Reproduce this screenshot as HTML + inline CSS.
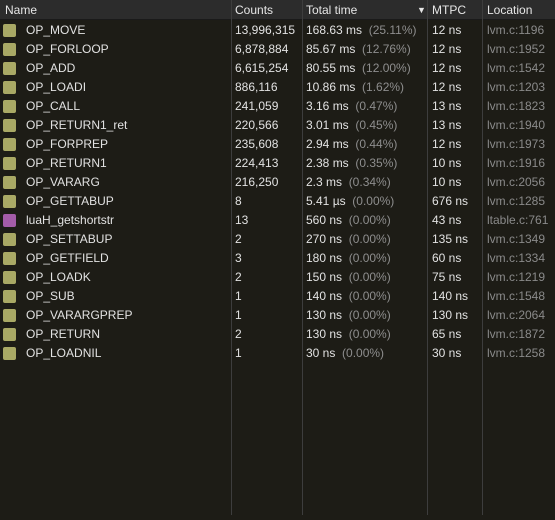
<!DOCTYPE html>
<html><head><style>
body{margin:0;width:555px;height:520px;background:#1d1c16;overflow:hidden;font-family:"Liberation Sans","DejaVu Sans",sans-serif;font-size:12px;color:#e2e2e2;position:relative}
.hdr{position:absolute;left:0;top:0;width:555px;height:19px;background:#2c2c2c;border-bottom:1px solid #1a1a1a}
.hdr span{position:absolute;top:0;line-height:20px;color:#e6e6e6}
.vl{position:absolute;top:0;height:515px;width:1px;background:#3d3d3d}
.r{position:absolute;left:0;width:555px;height:19px;line-height:19px}
.r span{position:absolute;top:0;white-space:pre}
.sq{position:absolute;left:3px;top:3px;width:13px;height:13px;border-radius:2px;background:#a9a965}
.p{color:#8e8e8e}
.loc{color:#8a8a8a}
</style></head><body>
<div class="hdr">
<span style="left:5px">Name</span>
<span style="left:235px">Counts</span>
<span style="left:306px">Total time</span>
<span style="left:417px;font-size:9px">▼</span>
<span style="left:432px">MTPC</span>
<span style="left:487px">Location</span>
</div>
<div class="vl" style="left:231px"></div>
<div class="vl" style="left:302px"></div>
<div class="vl" style="left:427px"></div>
<div class="vl" style="left:482px"></div>
<div id="rows"></div>
<div class="r" style="top:21px"><div class="sq"></div><span style="left:26px">OP_MOVE</span><span style="left:235px">13,996,315</span><span style="left:306px">168.63 ms  <span class="p" style="position:static">(25.11%)</span></span><span style="left:432px">12 ns</span><span class="loc" style="left:487px">lvm.c:1196</span></div>
<div class="r" style="top:40px"><div class="sq"></div><span style="left:26px">OP_FORLOOP</span><span style="left:235px">6,878,884</span><span style="left:306px">85.67 ms  <span class="p" style="position:static">(12.76%)</span></span><span style="left:432px">12 ns</span><span class="loc" style="left:487px">lvm.c:1952</span></div>
<div class="r" style="top:59px"><div class="sq"></div><span style="left:26px">OP_ADD</span><span style="left:235px">6,615,254</span><span style="left:306px">80.55 ms  <span class="p" style="position:static">(12.00%)</span></span><span style="left:432px">12 ns</span><span class="loc" style="left:487px">lvm.c:1542</span></div>
<div class="r" style="top:78px"><div class="sq"></div><span style="left:26px">OP_LOADI</span><span style="left:235px">886,116</span><span style="left:306px">10.86 ms  <span class="p" style="position:static">(1.62%)</span></span><span style="left:432px">12 ns</span><span class="loc" style="left:487px">lvm.c:1203</span></div>
<div class="r" style="top:97px"><div class="sq"></div><span style="left:26px">OP_CALL</span><span style="left:235px">241,059</span><span style="left:306px">3.16 ms  <span class="p" style="position:static">(0.47%)</span></span><span style="left:432px">13 ns</span><span class="loc" style="left:487px">lvm.c:1823</span></div>
<div class="r" style="top:116px"><div class="sq"></div><span style="left:26px">OP_RETURN1_ret</span><span style="left:235px">220,566</span><span style="left:306px">3.01 ms  <span class="p" style="position:static">(0.45%)</span></span><span style="left:432px">13 ns</span><span class="loc" style="left:487px">lvm.c:1940</span></div>
<div class="r" style="top:135px"><div class="sq"></div><span style="left:26px">OP_FORPREP</span><span style="left:235px">235,608</span><span style="left:306px">2.94 ms  <span class="p" style="position:static">(0.44%)</span></span><span style="left:432px">12 ns</span><span class="loc" style="left:487px">lvm.c:1973</span></div>
<div class="r" style="top:154px"><div class="sq"></div><span style="left:26px">OP_RETURN1</span><span style="left:235px">224,413</span><span style="left:306px">2.38 ms  <span class="p" style="position:static">(0.35%)</span></span><span style="left:432px">10 ns</span><span class="loc" style="left:487px">lvm.c:1916</span></div>
<div class="r" style="top:173px"><div class="sq"></div><span style="left:26px">OP_VARARG</span><span style="left:235px">216,250</span><span style="left:306px">2.3 ms  <span class="p" style="position:static">(0.34%)</span></span><span style="left:432px">10 ns</span><span class="loc" style="left:487px">lvm.c:2056</span></div>
<div class="r" style="top:192px"><div class="sq"></div><span style="left:26px">OP_GETTABUP</span><span style="left:235px">8</span><span style="left:306px">5.41 µs  <span class="p" style="position:static">(0.00%)</span></span><span style="left:432px">676 ns</span><span class="loc" style="left:487px">lvm.c:1285</span></div>
<div class="r" style="top:211px"><div class="sq" style="background:#a45ca8"></div><span style="left:26px">luaH_getshortstr</span><span style="left:235px">13</span><span style="left:306px">560 ns  <span class="p" style="position:static">(0.00%)</span></span><span style="left:432px">43 ns</span><span class="loc" style="left:487px">ltable.c:761</span></div>
<div class="r" style="top:230px"><div class="sq"></div><span style="left:26px">OP_SETTABUP</span><span style="left:235px">2</span><span style="left:306px">270 ns  <span class="p" style="position:static">(0.00%)</span></span><span style="left:432px">135 ns</span><span class="loc" style="left:487px">lvm.c:1349</span></div>
<div class="r" style="top:249px"><div class="sq"></div><span style="left:26px">OP_GETFIELD</span><span style="left:235px">3</span><span style="left:306px">180 ns  <span class="p" style="position:static">(0.00%)</span></span><span style="left:432px">60 ns</span><span class="loc" style="left:487px">lvm.c:1334</span></div>
<div class="r" style="top:268px"><div class="sq"></div><span style="left:26px">OP_LOADK</span><span style="left:235px">2</span><span style="left:306px">150 ns  <span class="p" style="position:static">(0.00%)</span></span><span style="left:432px">75 ns</span><span class="loc" style="left:487px">lvm.c:1219</span></div>
<div class="r" style="top:287px"><div class="sq"></div><span style="left:26px">OP_SUB</span><span style="left:235px">1</span><span style="left:306px">140 ns  <span class="p" style="position:static">(0.00%)</span></span><span style="left:432px">140 ns</span><span class="loc" style="left:487px">lvm.c:1548</span></div>
<div class="r" style="top:306px"><div class="sq"></div><span style="left:26px">OP_VARARGPREP</span><span style="left:235px">1</span><span style="left:306px">130 ns  <span class="p" style="position:static">(0.00%)</span></span><span style="left:432px">130 ns</span><span class="loc" style="left:487px">lvm.c:2064</span></div>
<div class="r" style="top:325px"><div class="sq"></div><span style="left:26px">OP_RETURN</span><span style="left:235px">2</span><span style="left:306px">130 ns  <span class="p" style="position:static">(0.00%)</span></span><span style="left:432px">65 ns</span><span class="loc" style="left:487px">lvm.c:1872</span></div>
<div class="r" style="top:344px"><div class="sq"></div><span style="left:26px">OP_LOADNIL</span><span style="left:235px">1</span><span style="left:306px">30 ns  <span class="p" style="position:static">(0.00%)</span></span><span style="left:432px">30 ns</span><span class="loc" style="left:487px">lvm.c:1258</span></div>
</body></html>
